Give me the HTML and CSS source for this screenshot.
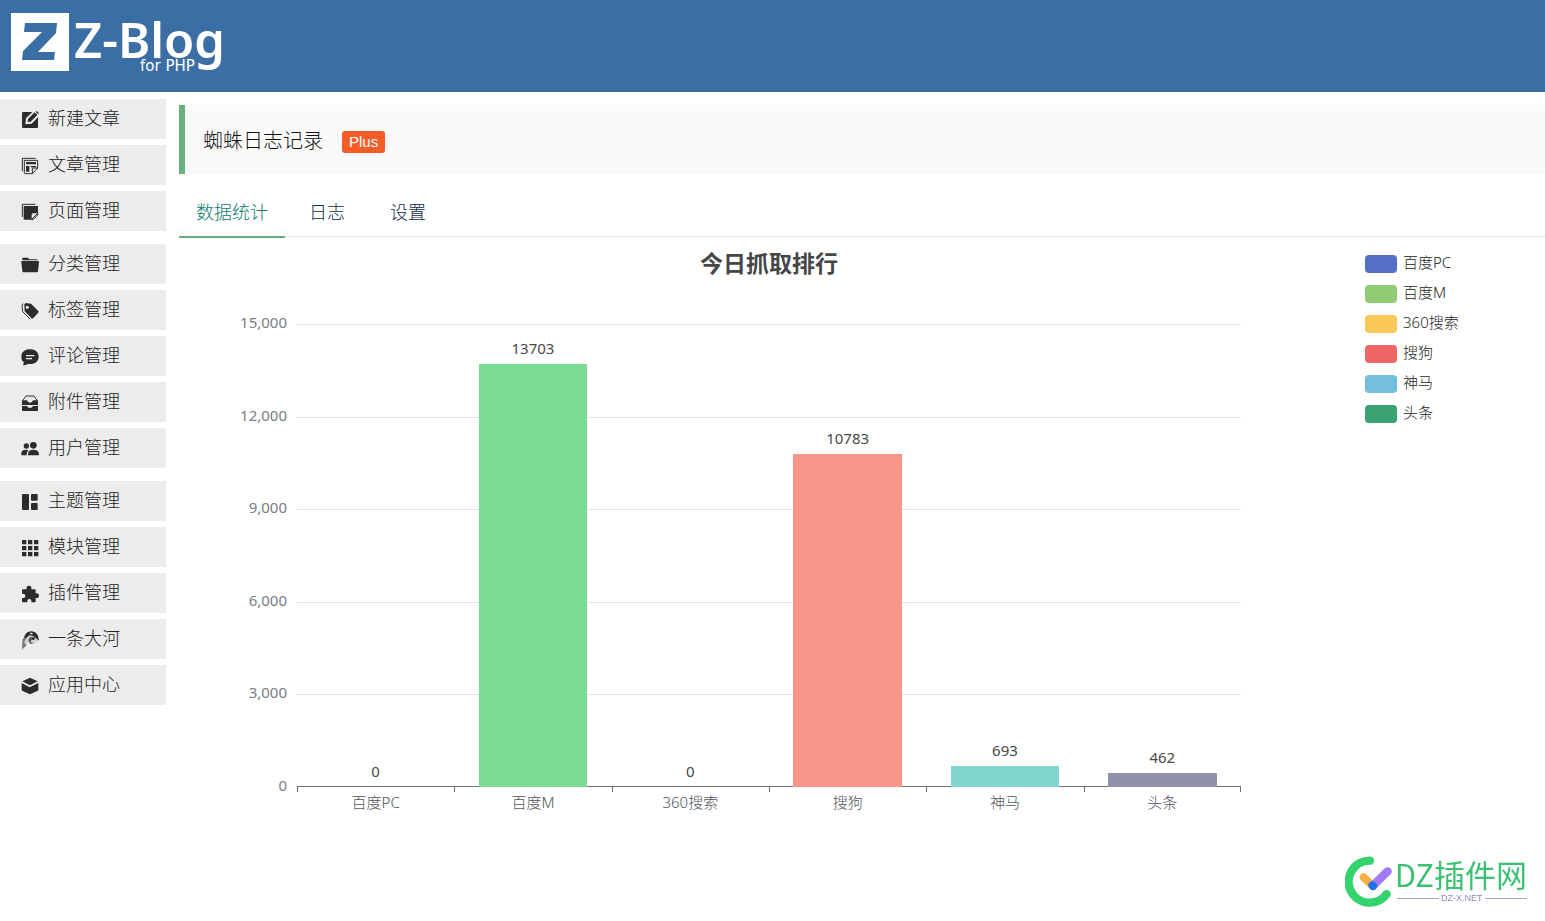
FILE: index.html
```
<!DOCTYPE html>
<html lang="zh-CN">
<head>
<meta charset="utf-8">
<title>蜘蛛日志记录</title>
<link rel="stylesheet" href="styles.css">
</head>
<body>
<header class="topbar">
  <a class="logo" href="#">
    <svg width="216" height="64" viewBox="0 0 216 64" role="img" aria-label="Z-Blog for PHP">
      <path fill="#fff" fill-rule="evenodd" d="M0 0H58V58H0ZM14 10H46L45 20L27 39H44L43 47H11L12 38L31 19H13Z"/>
      <text class="logo-name" x="63" y="45">Z-Blog</text>
      <text class="logo-sub" x="129" y="58">for PHP</text>
    </svg>
  </a>
</header>
<div class="layout">
  <nav class="sidebar">
    <ul class="menu">
      <li><a href="#"><svg class="icon" viewBox="0 0 54 54"><path d="M6 3H34L15 22L13 40L32 38L51 19V48Q51 51 48 51H6Q3 51 3 48V6Q3 3 6 3Z"/><path d="M20 33L21 24L41 4L49 12L29 32Z"/><path d="M44 2L47 0L54 7L51 10Z"/></svg>新建文章</a></li>
      <li><a href="#"><svg class="icon" viewBox="0 0 54 54"><g class="stroke"><path d="M4 43V4H44"/><path d="M10 48V10H50V33L34 50H10"/><path d="M34 49V33H50"/></g><path d="M15 15H45V22H15ZM15 27H25V44H15ZM29 27H45V31H29Z"/></svg>文章管理</a></li>
      <li><a href="#"><svg class="icon" viewBox="0 0 54 54"><path class="stroke" d="M4 42V4H43"/><path d="M10 9H51V31H37Q32 31 32 36V50H10Q8 50 8 47V11Q8 9 10 9Z"/><path class="stroke" d="M32 49L50 31V36L36 50H31Z"/></svg>页面管理</a></li>
    </ul>
    <ul class="menu">
      <li><a href="#"><svg class="icon" viewBox="0 0 54 54"><path d="M5 5H20L26 10H47Q50 10 50 13H4V7Z"/><path d="M2 15H52Q54 15 54 18L51 46Q51 49 47 49H8Q4 49 4 46L1 18Q0 15 2 15Z"/></svg>分类管理</a></li>
      <li><a href="#"><svg class="icon" viewBox="0 0 54 54"><path fill-rule="evenodd" d="M10 7L14 3L30 5L52 27Q54 30 51 33L37 48Q34 51 31 48L11 28ZM19 11A5 5 0 1 0 19 21A5 5 0 1 0 19 11Z"/><path class="stroke" d="M6 5L3 10L5 29L27 51"/></svg>标签管理</a></li>
      <li><a href="#"><svg class="icon" viewBox="0 0 54 54"><path d="M27 4C42 4 53 12 53 26C53 40 42 48 28 48Q25 48 22 47Q16 52 6 52L9 43Q1 38 1 26C1 12 12 4 27 4Z"/><path class="light-line" d="M15 23H40M15 32H33"/></svg>评论管理</a></li>
      <li><a href="#"><svg class="icon" viewBox="0 0 54 54"><path class="stroke" d="M5 20L15 6H39L49 20"/><path d="M3 19H18Q20 26 27 26Q34 26 36 19H51V33H3ZM3 36H18Q20 42 27 42Q34 42 36 36H51V48Q51 51 48 51H6Q3 51 3 48Z"/></svg>附件管理</a></li>
      <li><a href="#"><svg class="icon" viewBox="0 0 54 54"><circle cx="16" cy="18" r="8"/><circle cx="37" cy="16" r="10"/><path d="M1 46V39Q2 29 15 29Q19 29 22 31Q17 37 17 46ZM21 46V42Q22 29 37 29Q53 29 54 42V46Z"/></svg>用户管理</a></li>
    </ul>
    <ul class="menu">
      <li><a href="#"><svg class="icon" viewBox="0 0 54 54"><rect x="3" y="3" width="21" height="48" rx="3"/><rect x="30" y="3" width="20" height="20" rx="3"/><rect x="30" y="30" width="20" height="21" rx="3"/></svg>主题管理</a></li>
      <li><a href="#"><svg class="icon" viewBox="0 0 54 54"><path d="M3 3H16V16H3ZM21 3H34V16H21ZM39 3H52V16H39ZM3 21H16V34H3ZM21 21H34V34H21ZM39 21H52V34H39ZM3 39H16V52H3ZM21 39H34V52H21ZM39 39H52V52H39Z"/></svg>模块管理</a></li>
      <li><a href="#"><svg class="icon" viewBox="0 0 54 54"><path d="M6 13H17Q15 2 24 2Q33 2 31 13H41Q44 13 44 16V25Q54 24 54 32Q54 40 44 39V49Q44 52 41 52H31Q32 42 25 42Q18 42 19 52H6Q3 52 3 49V39Q13 40 13 32Q13 25 3 26V16Q3 13 6 13Z"/></svg>插件管理</a></li>
      <li><a href="#"><svg class="icon" viewBox="0 0 54 54"><path fill="#d2d2d2" d="M8 14Q22 0 38 4Q52 10 52 24Q50 36 36 38L20 35L8 44Z"/><path d="M10 17Q16 1 32 1Q45 2 51 15L54 29L45 22L36 15L24 13L17 20L8 30Z"/><path fill="#777" d="M5 24L14 18L10 35L17 43L5 54L7 43L2 60Z"/><path fill="#555" d="M22 28Q24 18 33 18L43 24L34 24L28 33L38 37L28 39Z"/><circle cx="37" cy="23" r="4"/><path fill="#ddd" d="M29 4L36 8L33 11L27 8Z"/></svg>一条大河</a></li>
      <li><a href="#"><svg class="icon" viewBox="0 0 54 54"><path d="M27 2L50 13L27 25L4 13ZM2 18L26 31L52 18V38Q52 41 49 42L27 52L5 42Q2 41 2 38Z"/></svg>应用中心</a></li>
    </ul>
  </nav>
  <main class="content">
    <div class="heading">
      <h1>蜘蛛日志记录</h1>
      <span class="badge">Plus</span>
    </div>
    <nav class="tabs">
      <a class="tab active" href="#">数据统计</a>
      <a class="tab" href="#">日志</a>
      <a class="tab" href="#">设置</a>
    </nav>
    <section class="stats">
      <div class="chart">
        <h2>今日抓取排行</h2>
        <div class="y-axis">
          <span>15,000</span><span>12,000</span><span>9,000</span><span>6,000</span><span>3,000</span><span>0</span>
        </div>
        <div class="gridlines"><i></i><i></i><i></i><i></i><i></i></div>
        <div class="bars">
          <div class="column"><span>0</span><div class="bar" style="height:0%"></div></div>
          <div class="column"><span>13703</span><div class="bar green" style="height:91.35%"></div></div>
          <div class="column"><span>0</span><div class="bar" style="height:0%"></div></div>
          <div class="column"><span>10783</span><div class="bar red" style="height:71.89%"></div></div>
          <div class="column"><span>693</span><div class="bar teal" style="height:4.62%"></div></div>
          <div class="column"><span>462</span><div class="bar slate" style="height:3.08%"></div></div>
        </div>
        <div class="x-axis">
          <span>百度PC</span><span>百度M</span><span>360搜索</span><span>搜狗</span><span>神马</span><span>头条</span>
        </div>
      </div>
      <ul class="legend">
        <li><i class="swatch s1"></i>百度PC</li>
        <li><i class="swatch s2"></i>百度M</li>
        <li><i class="swatch s3"></i>360搜索</li>
        <li><i class="swatch s4"></i>搜狗</li>
        <li><i class="swatch s5"></i>神马</li>
        <li><i class="swatch s6"></i>头条</li>
      </ul>
    </section>
  </main>
</div>
<div class="watermark">
  <svg width="48" height="52" viewBox="0 0 144 156" aria-hidden="true">
    <g fill="none" stroke-linecap="round">
      <path stroke="#34d36d" stroke-width="25" d="M75 17A63 63 0 1 0 125 117"/>
      <path stroke="#fdae42" stroke-width="24" d="M56 67L76 86"/>
      <path stroke="#a27cf6" stroke-width="25" d="M84 92L128 49"/>
      <path stroke="#1f70ea" stroke-width="25" d="M82 91L84 93"/>
    </g>
  </svg>
  <div class="watermark-text">
    <strong>DZ插件网</strong>
    <small>DZ-X.NET</small>
  </div>
</div>
</body>
</html>
```
FILE: styles.css
```
* { box-sizing: border-box; }
body {
  margin: 0;
  min-height: 100vh;
  background: #fff;
  color: #222;
  font-family: "Noto Sans", "Noto Sans CJK SC", sans-serif;
  font-weight: 300;
}
a { color: inherit; text-decoration: none; }
ul { list-style: none; margin: 0; padding: 0; }

.topbar { height: 92px; padding: 13px 11px; background: #3a6ea5; }
.logo { display: block; width: 216px; }
.logo svg { display: block; overflow: visible; }
.logo text { fill: #fff; }
.logo-name { font: 600 49px "Noto Sans", sans-serif; }
.logo-sub { font: 400 15px "DejaVu Sans", sans-serif; }

.layout { display: grid; grid-template-columns: 166px minmax(0, 1fr); gap: 13px; }
.sidebar { display: flex; flex-direction: column; gap: 13px; padding-top: 7px; }
.menu { display: flex; flex-direction: column; gap: 6px; }
.menu a {
  display: flex;
  align-items: center;
  gap: 9px;
  height: 40px;
  padding: 0 0 4px 21px;
  background: #ececec;
  font-family: "Noto Sans CJK SC", sans-serif;
  font-size: 18px;
  line-height: 24px;
}
.icon { width: 18px; height: 18px; margin-top: 5px; overflow: visible; fill: #2c2c2c; }
.icon .stroke { fill: none; stroke: #2c2c2c; stroke-width: 3; }
.icon .light-line { fill: none; stroke: #ececec; stroke-width: 4; }

.content { padding-top: 13px; }
.heading {
  display: flex;
  align-items: center;
  gap: 19px;
  height: 69px;
  padding-left: 18px;
  border-left: 6px solid #66b17d;
  background: #fafafa;
}
.heading h1 { margin: 0; color: #111; font: 300 20px/28px "Noto Sans CJK SC", sans-serif; }
.badge {
  margin-top: 4px;
  padding: 0 7px;
  border-radius: 3px;
  background: #f55d27;
  color: #fff;
  font: 400 15px/22px "Liberation Sans", Arial, sans-serif;
}
.tabs {
  display: flex;
  gap: 3px;
  margin-top: 13px;
  border-bottom: 1px solid #e8e8e8;
}
.tab {
  min-width: 78px;
  height: 51px;
  margin-bottom: -2px;
  padding: 0 18px;
  color: #0f2b47;
  font: 300 18px/48px "Noto Sans CJK SC", sans-serif;
  text-align: center;
}
.tab.active { padding: 0 17px; border-bottom: 2px solid #5fb080; color: #0c7a6c; }

.stats { display: grid; grid-template-columns: 1180fr 186fr; font-size: 15px; line-height: 20px; }
.chart {
  display: grid;
  grid-template-columns: 10% 80%;
  grid-template-rows: 87px 463px auto;
}
.chart h2 {
  grid-area: 1 / 2;
  margin: 9px 0 0;
  color: #464646;
  font: 700 23px/32px "Noto Sans CJK SC", sans-serif;
  text-align: center;
}
.y-axis {
  grid-area: 2 / 1;
  display: flex;
  flex-direction: column;
  justify-content: space-between;
  margin: -12px 10px -8px 0;
  color: #7a7c84;
  font-weight: 400;
  text-align: right;
}
.gridlines { grid-area: 2 / 2; display: grid; grid-template-rows: repeat(5, 1fr); }
.gridlines i { border-top: 1px solid #e0e6e8; }
.bars {
  grid-area: 2 / 2;
  z-index: 1;
  display: grid;
  grid-template-columns: repeat(6, 1fr);
  color: #484848;
  font-weight: 400;
}
.column {
  display: flex;
  flex-direction: column;
  align-items: center;
  justify-content: flex-end;
  min-height: 0;
}
.column span { margin-bottom: 6px; }
.bar { flex: none; width: 69%; }
.green { background: #7adc93; }
.red { background: #f99589; }
.teal { background: #7ed6cf; }
.slate { background: #8f92aa; }
.x-axis {
  grid-area: 3 / 2;
  display: grid;
  grid-template-columns: repeat(6, 1fr);
  margin-top: -1px;
  border-top: 1px solid #6e7079;
  color: #50525a;
  text-align: center;
}
.x-axis span {
  padding-top: 5px;
  background: linear-gradient(#6e7079, #6e7079) 0 0 / 1px 5px no-repeat;
}
.x-axis span:last-child {
  background: linear-gradient(#6e7079, #6e7079) 0 0 / 1px 5px no-repeat,
    linear-gradient(#6e7079, #6e7079) 100% 0 / 1px 5px no-repeat;
}

.legend { display: flex; flex-direction: column; gap: 10px; padding: 15px 0 0 6px; }
.legend li { display: flex; align-items: center; gap: 6px; height: 20px; }
.swatch { width: 32px; height: 18px; margin-top: 4px; border-radius: 4px; }
.s1 { background: #5470c6; }
.s2 { background: #91cc75; }
.s3 { background: #fac858; }
.s4 { background: #ee6666; }
.s5 { background: #73c0de; }
.s6 { background: #3ba272; }

.watermark {
  position: fixed;
  right: 18px;
  bottom: 14px;
  display: flex;
  align-items: flex-end;
  gap: 2px;
}
.watermark svg { display: block; }
.watermark-text { display: flex; flex-direction: column; padding-bottom: 3px; }
.watermark strong { color: #3cc172; font: 400 31px/36px "Noto Sans CJK SC", sans-serif; }
.watermark small {
  display: flex;
  align-items: center;
  gap: 2px;
  margin-left: 2px;
  color: #8f86bd;
  font: 400 9px/12px "Liberation Sans", Arial, sans-serif;
}
.watermark small::before,
.watermark small::after { content: ""; flex: 1; border-top: 1px solid #a9a0d0; }
```
